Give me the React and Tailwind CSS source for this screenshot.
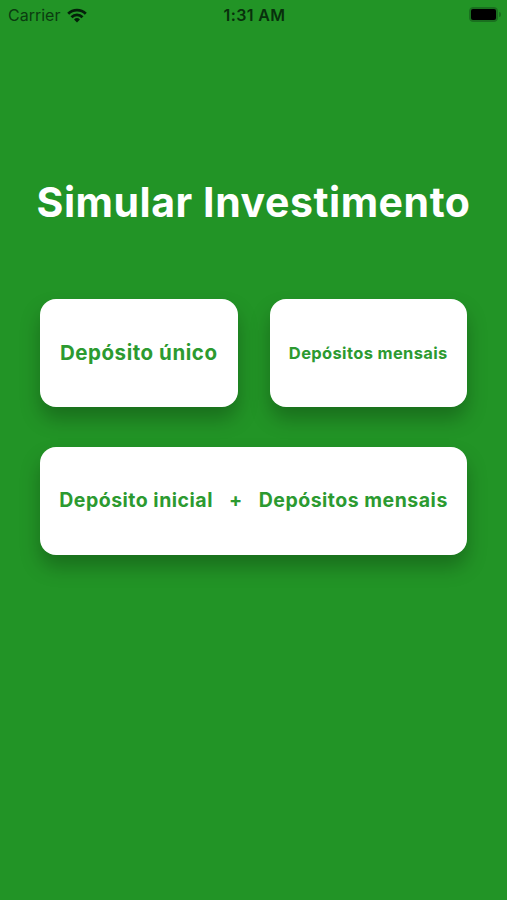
const font = "font-['Inter',sans-serif]";

function StatusBar() {
  return (
    <header className="grid h-[30px] grid-cols-3 items-center pl-2 pr-1.5 text-[16px] text-[#0b3c10]">
      <div className="flex items-center gap-[7px]">
        <span>Carrier</span>
        <svg viewBox="0 0 20 15" className="h-[15px] w-5" fill="none" stroke="#04200a" strokeWidth="2.8">
          <path d="M1.2 5.7a12.5 12.5 0 0 1 17.6 0" />
          <path d="M4.5 9.2a7.8 7.8 0 0 1 11 0" />
          <path d="M10 14.5l-3-3a4.3 4.3 0 0 1 6 0z" fill="#04200a" stroke="none" />
        </svg>
      </div>
      <span className="text-center font-semibold tracking-[0.4px] whitespace-nowrap text-[#08300c]">1:31 AM</span>
      <div className="flex items-center justify-end gap-px pb-px">
        <div className="h-[15px] w-[29px] rounded-[4px] border border-[#1a701f] bg-[#1a701f] p-px">
          <div className="h-full rounded-[2px] bg-black" />
        </div>
        <div className="h-[5px] w-[2px] rounded-r-full bg-[#1a701f]" />
      </div>
    </header>
  );
}

function Card({ children, className }) {
  return (
    <button className={`flex h-[108px] items-center justify-center rounded-[16px] bg-white font-bold whitespace-nowrap text-[#2c9a30] shadow-[0_12px_20px_rgba(0,0,0,0.26)] ${className}`}>
      {children}
    </button>
  );
}

export default function App() {
  return (
    <div className={`h-[900px] w-[507px] bg-[#229426] ${font}`}>
      <StatusBar />
      <main className="px-10 pt-[148px]">
        <h1 className="flex h-[50px] items-center justify-center text-[41px] font-bold tracking-[0.55px] whitespace-nowrap text-white">
          Simular Investimento
        </h1>
        <div className="mt-[71px] grid grid-cols-2 gap-x-8 gap-y-10">
          <Card className="text-[20.5px] tracking-[0.55px]">Depósito único</Card>
          <Card className="text-[16.5px] tracking-[0.35px]">Depósitos mensais</Card>
          <Card className="col-span-2 gap-4 text-[19.5px] tracking-[0.5px]">
            <span>Depósito inicial</span>
            <span>+</span>
            <span>Depósitos mensais</span>
          </Card>
        </div>
      </main>
    </div>
  );
}
